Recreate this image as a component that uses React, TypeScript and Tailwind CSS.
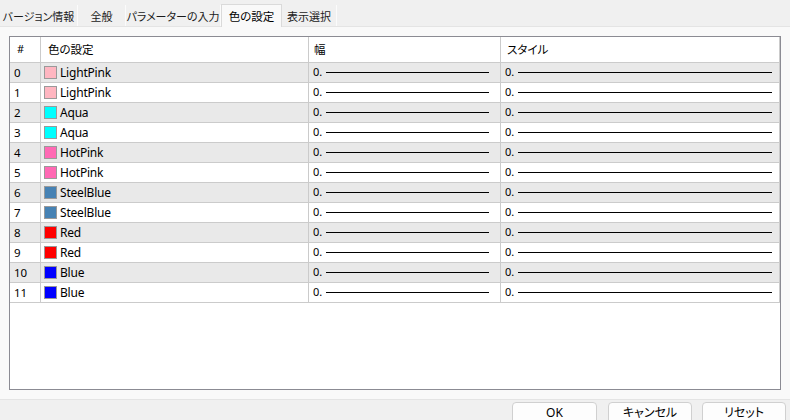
import React from "react";

const rows = [
  { c: "#FFB6C1", n: "LightPink" },
  { c: "#FFB6C1", n: "LightPink" },
  { c: "#00FFFF", n: "Aqua" },
  { c: "#00FFFF", n: "Aqua" },
  { c: "#FF69B4", n: "HotPink" },
  { c: "#FF69B4", n: "HotPink" },
  { c: "#4682B4", n: "SteelBlue" },
  { c: "#4682B4", n: "SteelBlue" },
  { c: "#FF0000", n: "Red" },
  { c: "#FF0000", n: "Red" },
  { c: "#0000FF", n: "Blue" },
  { c: "#0000FF", n: "Blue" },
];

const tabs = [
  { t: "バージョン情報", w: "w-[78px]" },
  { t: "全般", w: "w-[48px]" },
  { t: "パラメーターの入力", w: "w-[95px]" },
  { t: "色の設定", w: "w-[61px]", active: true },
  { t: "表示選択", w: "w-[55px]" },
];

export default function App() {
  return (
    <div className="w-[790px] h-[420px] overflow-hidden bg-[#f0f0f0] flex flex-col text-black [font-family:'Noto_Sans','Noto_Sans_CJK_JP',sans-serif] [font-feature-settings:'palt']">
      <div className="h-[26px] flex items-end shrink-0">
        {tabs.map((tab, i) =>
          tab.active ? (
            <div
              key={i}
              className={`${tab.w} h-[23px] bg-[#f9f9f9] border border-b-0 border-[#dadada] flex items-center justify-center whitespace-nowrap text-[11.5px] leading-none pt-[1px] relative z-10 -mb-px`}
            >
              {tab.t}
            </div>
          ) : (
            <div
              key={i}
              className={`${tab.w} h-[21px] bg-[#f0f0f0] border-r border-[#fbfbfb] flex items-center justify-center whitespace-nowrap text-[11px] leading-none pt-[1px] text-[#1a1a1a]`}
            >
              {tab.t}
            </div>
          )
        )}
      </div>
      <div className="h-[374px] shrink-0 bg-[#f9f9f9] border-t border-b border-[#e4e4e4] pt-[9px] pl-[9px]">
        <div className="w-[772px] h-[354px] border border-[#8b8b93] bg-white">
          <div className="grid grid-cols-[31px_268px_192px_279px]">
            <div className="h-[26px] border-r border-b border-[#cbcbcb] flex items-center pl-[7px] text-[11px]">#</div>
            <div className="h-[26px] border-r border-b border-[#cbcbcb] flex items-center pl-[7px] text-[11.5px]">色の設定</div>
            <div className="h-[26px] border-r border-b border-[#cbcbcb] flex items-center pl-[5px] text-[11.5px]">幅</div>
            <div className="h-[26px] border-r border-b border-[#cbcbcb] flex items-center pl-[6px] text-[11.5px]">スタイル</div>
            {rows.map((r, i) => {
              const bg = i % 2 === 0 ? "bg-[#e9e9e9]" : "bg-white";
              return (
                <React.Fragment key={i}>
                  <div className={`h-[20px] ${bg} border-r border-b border-[#cbcbcb] flex items-center pl-[4px] text-[11.5px]`}>
                    {i}
                  </div>
                  <div className={`h-[20px] ${bg} border-r border-b border-[#cbcbcb] flex items-center pl-[3px] gap-[3px] text-[12px]`}>
                    <span className="w-[13px] h-[13px] border border-[#9a9a9a] shrink-0" style={{ backgroundColor: r.c }} />
                    <span className="tracking-[-0.2px]">{r.n}</span>
                  </div>
                  <div className={`h-[20px] ${bg} border-r border-b border-[#cbcbcb] flex items-center pl-[4px] pr-[11px] text-[11px]`}>
                    <span className="w-[13px]">0.</span>
                    <span className="flex-1 h-[1.5px] bg-black" />
                  </div>
                  <div className={`h-[20px] ${bg} border-r border-b border-[#cbcbcb] flex items-center pl-[4px] pr-[7px] text-[11px]`}>
                    <span className="w-[13px]">0.</span>
                    <span className="flex-1 h-[1.5px] bg-black" />
                  </div>
                </React.Fragment>
              );
            })}
          </div>
        </div>
      </div>
      <div className="flex-1 flex justify-end items-start pt-[2px] pr-[4px]">
        <button className="w-[85px] h-[26px] rounded-[4px] border border-[#d0d0d0] bg-[#fdfdfd] text-[12px] flex items-center justify-center pb-[5px]">OK</button>
        <button className="ml-[11px] w-[84px] h-[26px] rounded-[4px] border border-[#d0d0d0] bg-[#fdfdfd] text-[12px] flex items-center justify-center pb-[5px]">キャンセル</button>
        <button className="ml-[10px] w-[84px] h-[26px] rounded-[4px] border border-[#d0d0d0] bg-[#fdfdfd] text-[12px] flex items-center justify-center pb-[5px]">リセット</button>
      </div>
    </div>
  );
}
